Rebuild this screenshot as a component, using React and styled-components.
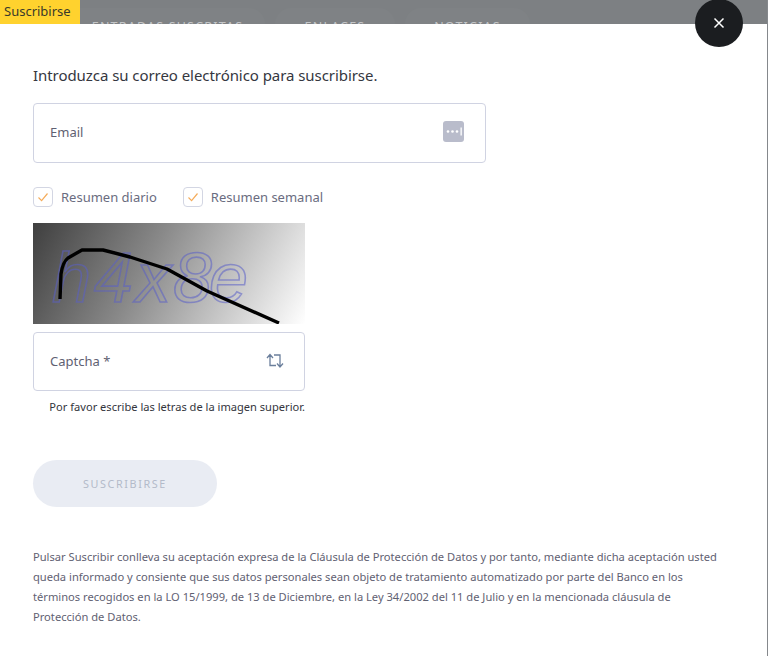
import React from "react";
import styled, { createGlobalStyle } from "styled-components";

const Global = createGlobalStyle`
  html, body { margin: 0; padding: 0; background: #fff; }
  body { font-family: "Noto Sans", Roboto, sans-serif; overflow: hidden; }
  * { box-sizing: border-box; }
`;
const Page = styled.div`
  position: relative;
  width: 768px;
  height: 656px;
  overflow: hidden;
  background: #fff;
  border-right: 1px solid #85888c;
`;
const TopBar = styled.div`
  display: flex;
  align-items: flex-end;
  height: 24px;
  background: #7d8083;
`;
const Badge = styled.div`
  width: 80px;
  height: 24px;
  padding: 0 4px;
  background: #ffd22e;
  color: #3a3a2a;
  font-size: 13px;
  line-height: 23px;
`;
const BackTabs = styled.div`
  display: flex;
  gap: 10px;
`;
const BackTab = styled.div`
  display: flex;
  justify-content: center;
  width: ${(p) => p.$w}px;
  height: 16px;
  padding-top: 12px;
  border-radius: 16px 16px 0 0;
  background: #7f8285;
  color: #c4c6c8;
  font-size: 12.5px;
  letter-spacing: 1.2px;
  line-height: 14px;
  white-space: nowrap;
  overflow: hidden;
`;
const FirstTab = styled(BackTab)`
  padding-right: 10px;
  border-top-left-radius: 0;
`;
const Close = styled.button`
  position: absolute;
  top: -1px;
  left: 695px;
  display: flex;
  align-items: center;
  justify-content: center;
  width: 48px;
  height: 48px;
  padding: 0;
  border: 0;
  border-radius: 50%;
  background: #1b1d20;
`;
const Body = styled.main`
  display: flex;
  flex-direction: column;
  padding: 41px 33px 0;
`;
const Title = styled.h1`
  margin: 0;
  color: #35373f;
  font-size: 15px;
  font-weight: 400;
  line-height: 20px;
  letter-spacing: -0.06px;
`;
const Field = styled.div`
  display: flex;
  align-items: center;
  justify-content: space-between;
  width: ${(p) => p.$w}px;
  height: 60px;
  padding: 0 ${(p) => p.$pr}px 2px 16px;
  border: 1.5px solid #d0d3e2;
  border-radius: 4px;
  background: #fff;
  color: #5f6172;
  font-size: 13px;
`;
const EmailField = styled(Field)`
  margin-top: 18px;
`;
const Checks = styled.div`
  display: flex;
  gap: 26px;
  margin-top: 24px;
`;
const Check = styled.label`
  display: flex;
  align-items: center;
  gap: 8px;
  color: #6a6c80;
  font-size: 13px;
  line-height: 20px;
`;
const Box = styled.span`
  display: flex;
  align-items: center;
  justify-content: center;
  width: 20px;
  height: 20px;
  border: 1.5px solid #d3d6e3;
  border-radius: 4px;
`;
const CaptchaImage = styled.div`
  width: 272px;
  height: 101px;
  margin-top: 16px;
  background: linear-gradient(118deg, #3f3f3f 0%, #8a8a8a 42%, #ffffff 100%);
`;
const CaptchaField = styled(Field)`
  margin-top: 8px;
  height: 59px;
`;
const Hint = styled.p`
  width: 272px;
  margin: 8px 0 0;
  color: #33343c;
  font-size: 11.1px;
  line-height: 16px;
  text-align: right;
  white-space: nowrap;
`;
const Submit = styled.button`
  width: 184px;
  height: 47px;
  margin-top: 45px;
  border: 0;
  border-radius: 24px;
  background: #e9ecf3;
  color: #b3bac9;
  font-family: inherit;
  font-size: 10.8px;
  letter-spacing: 1.6px;
`;
const Legal = styled.p`
  width: 690px;
  margin: 40px 0 0;
  color: #5f6172;
  font-size: 11.15px;
  line-height: 20px;
`;

const CheckMark = () => (
  <svg width="12" height="12" viewBox="0 0 12 12" fill="none" stroke="#f5ac5b" strokeWidth="1.2">
    <path d="M1.5 6.5 4.6 9.6 10.5 2.5" />
  </svg>
);

export default function App() {
  return (
    <Page>
      <Global />
      <TopBar>
        <Badge>Suscribirse</Badge>
        <BackTabs>
          <FirstTab $w={185}>ENTRADAS SUSCRITAS</FirstTab>
          <BackTab $w={120}>ENLACES</BackTab>
          <BackTab $w={125}>NOTICIAS</BackTab>
        </BackTabs>
      </TopBar>
      <Close aria-label="Cerrar">
        <svg width="12" height="12" viewBox="0 0 12 12" stroke="#fff" strokeWidth="1.5" fill="none">
          <path d="M1.5 1.5 10.5 10.5M10.5 1.5 1.5 10.5" />
        </svg>
      </Close>
      <Body>
        <Title>Introduzca su correo electrónico para suscribirse.</Title>
        <EmailField $w={453} $pr={20}>
          Email
          <svg width="22" height="22" viewBox="0 0 22 22">
            <rect width="21" height="21" rx="3" fill="#b9bccb" />
            <circle cx="5" cy="10.5" r="1.3" fill="#fff" />
            <circle cx="9.5" cy="10.5" r="1.3" fill="#fff" />
            <circle cx="14" cy="10.5" r="1.3" fill="#fff" />
            <rect x="17.5" y="6.5" width="1.3" height="8" fill="#fff" />
          </svg>
        </EmailField>
        <Checks>
          <Check><Box><CheckMark /></Box>Resumen diario</Check>
          <Check><Box><CheckMark /></Box>Resumen semanal</Check>
        </Checks>
        <CaptchaImage>
          <svg width="272" height="101" viewBox="0 0 272 101">
            <text x="19 61 103 140 176" y="79" fontFamily="Liberation Sans, sans-serif" fontSize="70" fontStyle="italic" fill="none" stroke="#5a5ec8" strokeOpacity="0.55" strokeWidth="1.6">h4x8e</text>
            <path d="M27 76 L28 51 C29 44 31 38 35 35 L49 27 L70 27 L97 34 L134 46 L174 68 L246 100" fill="none" stroke="#000" strokeWidth="3.4" strokeLinejoin="round" />
          </svg>
        </CaptchaImage>
        <CaptchaField $w={272} $pr={20}>
          Captcha *
          <svg width="18" height="16" viewBox="0 0 18 16" fill="none" stroke="#6b7f9c" strokeWidth="1.3">
            <path d="M1 5 4 1.5 7 5M4 2V12.5H10M8 2H14V13M11 10.5 14 14 17 10.5" />
          </svg>
        </CaptchaField>
        <Hint>Por favor escribe las letras de la imagen superior.</Hint>
        <Submit>SUSCRIBIRSE</Submit>
        <Legal>
          Pulsar Suscribir conlleva su aceptación expresa de la Cláusula de Protección de Datos y por tanto, mediante dicha aceptación usted queda informado y consiente que sus datos personales sean objeto de tratamiento automatizado por parte del Banco en los términos recogidos en la LO 15/1999, de 13 de Diciembre, en la Ley 34/2002 del 11 de Julio y en la mencionada cláusula de Protección de Datos.
        </Legal>
      </Body>
    </Page>
  );
}
